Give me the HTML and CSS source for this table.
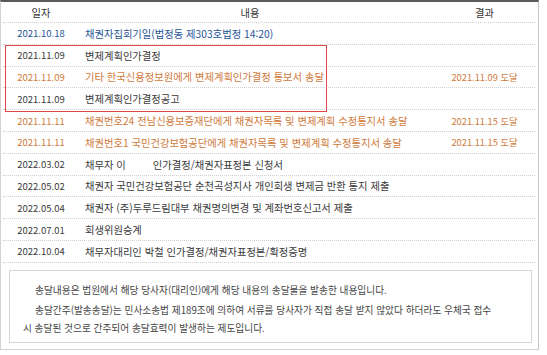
FILE: index.html
```html
<!DOCTYPE html>
<html lang="ko">
<head>
<meta charset="utf-8">
<link rel="stylesheet" href="styles.css">
</head>
<body>
<div class="panel">
  <div class="table">
    <div class="row head">
      <div class="c-date">일자</div>
      <div class="c-text">내용</div>
      <div class="c-res">결과</div>
    </div>
    <div class="row blue">
      <div class="c-date">2021.10.18</div>
      <div class="c-text">채권자집회기일(법정동 제303호법정 14:20)</div>
      <div class="c-res"></div>
    </div>
    <div class="group">
      <div class="row dark">
        <div class="c-date">2021.11.09</div>
        <div class="c-text">변제계획인가결정</div>
        <div class="c-res"></div>
      </div>
      <div class="row orange">
        <div class="c-date">2021.11.09</div>
        <div class="c-text">기타 한국신용정보원에게 변제계획인가결정 통보서 송달</div>
        <div class="c-res">2021.11.09 도달</div>
      </div>
      <div class="row dark">
        <div class="c-date">2021.11.09</div>
        <div class="c-text">변제계획인가결정공고</div>
        <div class="c-res"></div>
      </div>
    </div>
    <div class="row orange">
      <div class="c-date">2021.11.11</div>
      <div class="c-text">채권번호24 전남신용보증재단에게 채권자목록 및 변제계획 수정통지서 송달</div>
      <div class="c-res">2021.11.15 도달</div>
    </div>
    <div class="row orange">
      <div class="c-date">2021.11.11</div>
      <div class="c-text">채권번호1 국민건강보험공단에게 채권자목록 및 변제계획 수정통지서 송달</div>
      <div class="c-res">2021.11.15 도달</div>
    </div>
    <div class="row dark">
      <div class="c-date">2022.03.02</div>
      <div class="c-text">채무자 이<span class="gap"></span>인가결정/채권자표정본 신청서</div>
      <div class="c-res"></div>
    </div>
    <div class="row dark">
      <div class="c-date">2022.05.02</div>
      <div class="c-text">채권자 국민건강보험공단 순천곡성지사 개인회생 변제금 반환 통지 제출</div>
      <div class="c-res"></div>
    </div>
    <div class="row dark">
      <div class="c-date">2022.05.04</div>
      <div class="c-text">채권자 (주)두루드림대부 채권명의변경 및 계좌번호신고서 제출</div>
      <div class="c-res"></div>
    </div>
    <div class="row dark">
      <div class="c-date">2022.07.01</div>
      <div class="c-text">회생위원승계</div>
      <div class="c-res"></div>
    </div>
    <div class="row dark">
      <div class="c-date">2022.10.04</div>
      <div class="c-text">채무자대리인 박철 인가결정/채권자표정본/확정증명</div>
      <div class="c-res"></div>
    </div>
  </div>
  <div class="notice">
    <p class="first">송달내용은 법원에서 해당 당사자(대리인)에게 해당 내용의 송달물을 발송한 내용입니다.</p>
    <p>송달간주(발송송달)는 민사소송법 제189조에 의하여 서류를 당사자가 직접 송달 받지 않았다 하더라도 우체국 접수 시 송달된 것으로 간주되어 송달효력이 발생하는 제도입니다.</p>
  </div>
</div>
</body>
</html>
```
FILE: styles.css
```css
* { box-sizing: border-box; }
html, body { margin: 0; padding: 0; background: #ffffff; }
body {
  font-family: "Noto Sans CJK KR", "Noto Sans", sans-serif;
  font-size: 10.3px;
  color: #3a3a3a;
}
.panel {
  width: 539px;
  height: 350px;
  border-top: 2px solid #5a5a5a;
  border-left: 1px solid #d2d2d2;
  border-right: 1px solid #c4c4c4;
  border-bottom: 1px solid #d2d2d2;
  padding: 0 3px 0 2px;
  display: flex;
  flex-direction: column;
}
.table { display: flex; flex-direction: column; }
.row {
  display: grid;
  grid-template-columns: 76px 1fr 100px;
  align-items: center;
  height: 21.8px;
  border-bottom: 1px dotted #cfcfcf;
  white-space: nowrap;
}
.row.head { height: 21px; color: #333; }
.row.head .c-text { text-align: center; padding-right: 14px; padding-left: 0; }
.c-date { text-align: center; font-size: 9.5px; }
.c-text { padding-left: 6px; overflow: hidden; }
.c-res { text-align: center; padding-right: 1px; font-size: 9.3px; }
.head .c-date, .head .c-res { font-size: 10.3px; }
.blue { color: #1f5598; }
.orange { color: #cf7a3c; }
.dark { color: #3a3a3a; }
.gap { display: inline-block; width: 27px; }
.group { position: relative; }
.group::after {
  content: "";
  position: absolute;
  left: 2px;
  top: 0;
  width: 320px;
  height: 100%;
  border: 1.5px solid #e2474b;
  pointer-events: none;
}
.notice {
  margin: 7px 3px 0 6px;
  height: 73px;
  border: 1px solid #d4d4d4;
  padding: 10px 29px 0 13px;
  color: #444;
  font-size: 9.7px;
  word-break: keep-all;
}
.notice p {
  margin: 0;
  text-indent: 12px;
  line-height: 18px;
}
.notice p.first { margin-bottom: 2px; }
```
